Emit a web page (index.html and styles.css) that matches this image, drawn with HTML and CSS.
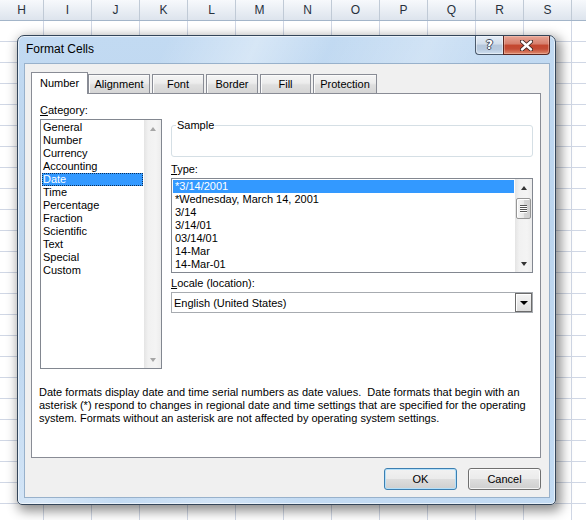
FILE: index.html
```html
<!DOCTYPE html>
<html>
<head>
<meta charset="utf-8">
<title>Format Cells</title>
<link rel="stylesheet" href="styles.css">
</head>
<body>
<div class="sheet">
  <div class="colhead">
    <div class="col first">H</div>
    <div class="col">I</div>
    <div class="col">J</div>
    <div class="col">K</div>
    <div class="col">L</div>
    <div class="col">M</div>
    <div class="col">N</div>
    <div class="col">O</div>
    <div class="col">P</div>
    <div class="col">Q</div>
    <div class="col">R</div>
    <div class="col">S</div>
    <div class="col last"></div>
  </div>
  <div class="grid"></div>
</div>

<div class="window">
  <div class="titlebar">
    <span class="title">Format Cells</span>
    <div class="caption">
      <div class="cap-help">?</div>
      <div class="cap-close">
        <svg width="13" height="11" viewBox="0 0 13 11">
          <path d="M2 1.5 L11 9.5 M11 1.5 L2 9.5" stroke="#3b2420" stroke-width="4.2" stroke-linecap="round" fill="none"/>
          <path d="M2 1.5 L11 9.5 M11 1.5 L2 9.5" stroke="#ffffff" stroke-width="2.4" stroke-linecap="round" fill="none"/>
        </svg>
      </div>
    </div>
  </div>
  <div class="client">
    <div class="tabs">
      <div class="tab sel w-number">Number</div>
      <div class="tab w-align">Alignment</div>
      <div class="tab w-font">Font</div>
      <div class="tab w-border">Border</div>
      <div class="tab w-fill">Fill</div>
      <div class="tab w-prot">Protection</div>
    </div>
    <div class="panel">
      <div class="leftcol">
        <div class="label"><u>C</u>ategory:</div>
        <div class="listbox cat">
          <div class="items">
            <div class="item">General</div>
            <div class="item">Number</div>
            <div class="item">Currency</div>
            <div class="item">Accounting</div>
            <div class="item sel focus">Date</div>
            <div class="item">Time</div>
            <div class="item">Percentage</div>
            <div class="item">Fraction</div>
            <div class="item">Scientific</div>
            <div class="item">Text</div>
            <div class="item">Special</div>
            <div class="item">Custom</div>
          </div>
          <div class="vscroll">
            <div class="arrow up disabled"></div>
            <div class="track"></div>
            <div class="arrow down disabled"></div>
          </div>
        </div>
      </div>
      <div class="rightcol">
        <fieldset class="sample">
          <legend>Sample</legend>
          <div class="sample-body"></div>
        </fieldset>
        <div class="label lbl-type"><u>T</u>ype:</div>
        <div class="listbox type">
          <div class="items">
            <div class="item sel">*3/14/2001</div>
            <div class="item">*Wednesday, March 14, 2001</div>
            <div class="item">3/14</div>
            <div class="item">3/14/01</div>
            <div class="item">03/14/01</div>
            <div class="item">14-Mar</div>
            <div class="item">14-Mar-01</div>
          </div>
          <div class="vscroll">
            <div class="arrow up"></div>
            <div class="track">
              <div class="thumb"><span></span><span></span><span></span><span></span></div>
            </div>
            <div class="arrow down"></div>
          </div>
        </div>
        <div class="label lbl-locale"><u>L</u>ocale (location):</div>
        <div class="combo">
          <div class="combo-text">English (United States)</div>
          <div class="combo-btn"></div>
        </div>
      </div>
      <div class="desc">
        <div>Date formats display date and time serial numbers as date values.&nbsp; Date formats that begin with an</div>
        <div>asterisk (*) respond to changes in regional date and time settings that are specified for the operating</div>
        <div>system. Formats without an asterisk are not affected by operating system settings.</div>
      </div>
    </div>
    <div class="buttons">
      <div class="btn default">OK</div>
      <div class="btn">Cancel</div>
    </div>
  </div>
</div>
</body>
</html>
```

FILE: styles.css
```css
* { box-sizing: border-box; }
html, body { margin: 0; padding: 0; }
body {
  width: 586px;
  height: 520px;
  overflow: hidden;
  background: #ffffff;
  position: relative;
  font-family: "Liberation Sans", Arial, sans-serif;
  font-size: 11px;
  color: #000;
}

/* ---------- spreadsheet ---------- */
.sheet { width: 586px; height: 520px; overflow: hidden; }
.colhead {
  display: flex;
  height: 21px;
  overflow: hidden;
  background: linear-gradient(#f7f9fc, #dde4ed);
  border-bottom: 1px solid #a3b5c9;
}
.colhead .col {
  flex: 0 0 48px;
  border-right: 1px solid #c0cad6;
  text-align: center;
  font-size: 12px;
  line-height: 20px;
  color: #27313c;
}
.colhead .col.first { flex-basis: 44px; }
.colhead .col.last { flex: 1 1 auto; border-right: none; }
.grid {
  height: 499px;
  background-image:
    linear-gradient(to right, #d0d7e5 1px, transparent 1px),
    linear-gradient(to bottom, #d0d7e5 1px, transparent 1px);
  background-size: 48px 21px, 48px 21px;
  background-position: 43px 0, 0 20px;
}

/* ---------- window ---------- */
.window {
  position: absolute;
  left: 17px;
  top: 35px;
  width: 539px;
  height: 470px;
  border: 1px solid #34465a;
  border-radius: 7px 7px 5px 5px;
  background:
    linear-gradient(115deg, rgba(255,255,255,0) 20%, rgba(255,255,255,0.35) 32%, rgba(255,255,255,0) 42%, rgba(255,255,255,0.25) 55%, rgba(255,255,255,0) 66%),
    linear-gradient(#c2daf2, #bcd5ee 40%, #c3dbf3);
  box-shadow: 3px 4px 12px 2px rgba(0,0,0,0.45), inset 0 0 0 1px rgba(255,255,255,0.6);
  padding: 0 5px 6px 6px;
  display: flex;
  flex-direction: column;
}
.titlebar {
  height: 27px;
  display: flex;
  justify-content: space-between;
  align-items: flex-start;
}
.title {
  padding-left: 2px;
  padding-top: 1px;
  line-height: 24px;
  font-size: 12px;
  color: #000;
}
.caption { display: flex; }
.cap-help {
  width: 28px;
  height: 19px;
  border: 1px solid #4b5a6c;
  border-top: none;
  border-right: none;
  border-radius: 0 0 0 4px;
  background: linear-gradient(#e4edf7 0%, #d2deeb 45%, #b6c7db 50%, #b8cadf 75%, #d0e0f0 100%);
  box-shadow: inset 0 0 0 1px rgba(255,255,255,0.45);
  text-align: center;
  font-family: "DejaVu Sans", sans-serif;
  font-weight: bold;
  font-size: 12px;
  line-height: 18px;
  color: #ffffff;
  text-shadow: 1px 0 0 #3f4b5b, -1px 0 0 #3f4b5b, 0 1px 0 #3f4b5b, 0 -1px 0 #3f4b5b;
}
.cap-close {
  width: 47px;
  height: 19px;
  border: 1px solid #5a2620;
  border-top: none;
  border-radius: 0 0 4px 0;
  background: linear-gradient(#e8a595 0%, #d67e6c 45%, #c4472f 50%, #c44c36 72%, #df8b6e 100%);
  box-shadow: inset 0 0 0 1px rgba(255,220,210,0.35);
  display: flex;
  align-items: center;
  justify-content: center;
}
.cap-close svg { display: block; }

.client {
  flex: 1;
  background: #f0f0f0;
  border: 1px solid #98b1cb;
  padding: 8px 8px 0 6px;
  display: flex;
  flex-direction: column;
}

/* ---------- tabs ---------- */
.tabs {
  display: flex;
  align-items: flex-end;
  height: 21px;
}
.tab {
  height: 19px;
  border: 1px solid #898c95;
  border-bottom: none;
  margin-right: 2px;
  background: linear-gradient(#f5f5f5 0%, #ececec 45%, #dfdfdf 55%, #d5d5d5 100%);
  box-shadow: inset 1px 1px 0 #fbfbfb;
  text-align: center;
  line-height: 19px;
  color: #000;
}
.tab.sel {
  height: 22px;
  margin-bottom: -1px;
  margin-right: 0;
  background: #ffffff;
  box-shadow: none;
  line-height: 21px;
  position: relative;
  z-index: 2;
}
.w-number { width: 57px; }
.w-align { width: 62px; }
.w-font { width: 52px; }
.w-border { width: 52px; }
.w-fill { width: 51px; }
.w-prot { width: 64px; }

/* ---------- panel ---------- */
.panel {
  height: 365px;
  border: 1px solid #898c95;
  background: #ffffff;
  padding: 10px 7px 0 8px;
  display: grid;
  grid-template-columns: 122px 362px;
  column-gap: 9px;
  align-content: start;
}
.label { line-height: 13px; height: 13px; }
.leftcol { display: flex; flex-direction: column; }
.rightcol { display: flex; flex-direction: column; }

.listbox {
  display: flex;
  border: 1px solid #828790;
  background: #fff;
}
.listbox.cat { width: 122px; height: 250px; margin-top: 2px; }
.listbox.type { height: 95px; margin-top: 2px; }
.listbox .items { flex: 1; padding: 1px 1px 0 1px; min-width: 0; }
.item {
  height: 13px;
  line-height: 13px;
  padding-left: 1px;
  white-space: nowrap;
}
.listbox.type .item { padding-left: 2px; }
.item.sel { background: #3399ff; color: #fff; }
.item.focus { outline: 1px dotted #0b2f5a; outline-offset: -1px; }

.vscroll {
  width: 17px;
  display: flex;
  flex-direction: column;
  background: linear-gradient(to right, #e4e4e4, #f1f1f1 25%, #f4f4f4 70%, #ececec);
}
.vscroll .track { flex: 1; padding: 2px 1px 0 1px; }
.arrow {
  height: 17px;
  display: flex;
  align-items: center;
  justify-content: center;
}
.arrow::before {
  content: "";
  width: 0;
  height: 0;
  border-left: 3.5px solid transparent;
  border-right: 3.5px solid transparent;
}
.arrow.up::before { border-bottom: 4px solid #333; }
.arrow.down::before { border-top: 4px solid #333; }
.arrow.up.disabled::before { border-bottom-color: #a6a6a6; }
.arrow.down.disabled::before { border-top-color: #a6a6a6; }

.thumb {
  height: 21px;
  border: 1px solid #969696;
  border-radius: 2px;
  background: linear-gradient(to right, #f6f6f6, #e8e8e8 50%, #d6d6d6 51%, #cfcfcf);
  box-shadow: inset 1px 1px 0 #fff;
  display: flex;
  flex-direction: column;
  align-items: center;
  justify-content: center;
  gap: 1px;
}
.thumb span {
  display: block;
  width: 7px;
  height: 1px;
  background: #555;
  box-shadow: 0 1px 0 #fff;
}

.sample {
  margin: 15px 0 0 0;
  padding: 0 0 0 4px;
  height: 38px;
  border: 1px solid #d5dfe5;
  border-radius: 3px;
  min-width: 0;
}
.sample legend {
  padding: 0 1px;
  line-height: 13px;
}
.lbl-type { margin-top: 6px; }
.lbl-locale { margin-top: 4px; }

.combo {
  margin-top: 2px;
  height: 21px;
  border: 1px solid #a7abb0;
  display: flex;
  align-items: stretch;
  padding: 0 0 0 2px;
}
.combo-text { flex: 1; line-height: 20px; }
.combo-btn {
  width: 17px;
  border: 1px solid #6b6b6b;
  background: linear-gradient(#f5f5f5, #dedede);
  box-shadow: inset 1px 1px 0 #ffffff;
  display: flex;
  align-items: center;
  justify-content: center;
}
.combo-btn::before {
  content: "";
  border-left: 4px solid transparent;
  border-right: 4px solid transparent;
  border-top: 4px solid #000;
}

.desc {
  grid-column: 1 / 3;
  margin-top: 17px;
  margin-left: -1px;
  line-height: 13px;
  white-space: nowrap;
}

/* ---------- buttons ---------- */
.buttons {
  display: flex;
  justify-content: flex-end;
  gap: 11px;
  margin-top: 10px;
}
.btn {
  width: 73px;
  height: 22px;
  border: 1px solid #707070;
  border-radius: 3px;
  background: linear-gradient(#f2f2f2 0%, #ebebeb 48%, #dddddd 52%, #cfcfcf 100%);
  box-shadow: inset 0 0 0 1px rgba(255,255,255,0.75);
  text-align: center;
  line-height: 20px;
}
.btn.default {
  border-color: #3c7fb1;
  box-shadow: inset 0 0 0 1px #b4e0fa;
}
```
